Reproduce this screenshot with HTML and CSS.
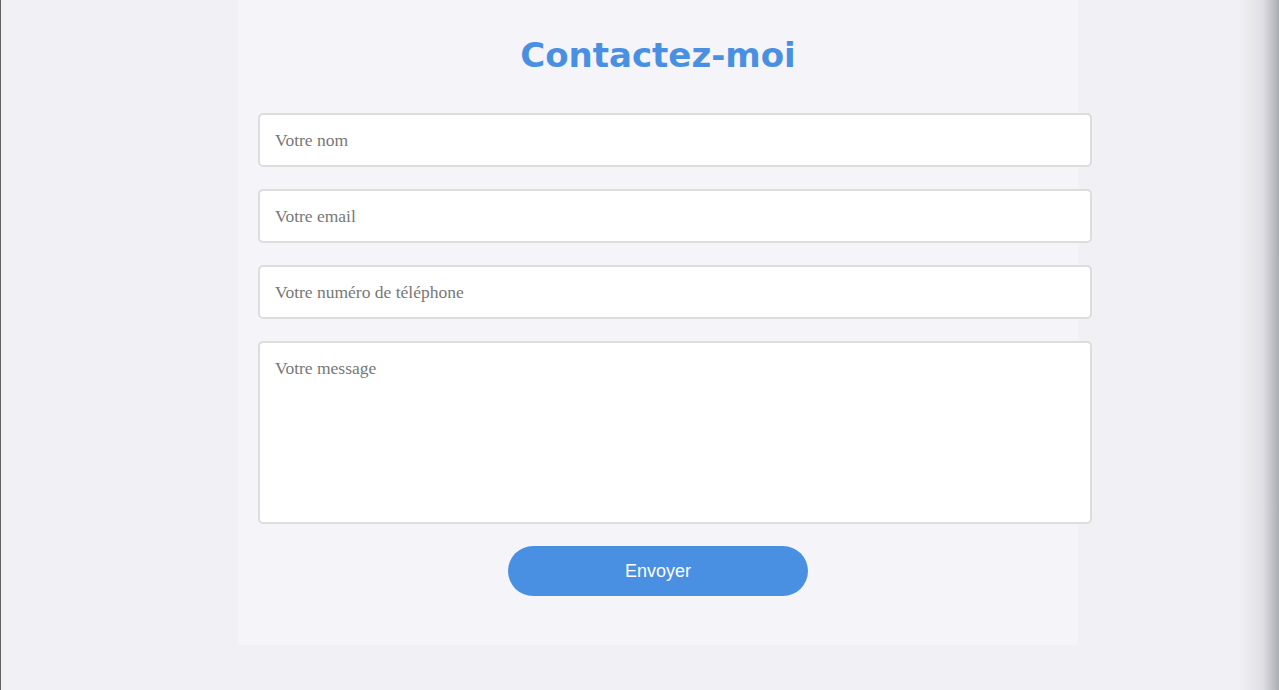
FILE: index.html
```html
<!DOCTYPE html>
<html lang="fr">
<head>
<meta charset="utf-8">
<title>Contactez-moi</title>
<link rel="stylesheet" href="styles.css">
</head>
<body>
<div class="page">
  <section class="contact">
    <h1 class="title">Contactez-moi</h1>
    <form class="form">
      <input class="field" type="text" placeholder="Votre nom">
      <input class="field" type="email" placeholder="Votre email">
      <input class="field" type="tel" placeholder="Votre numéro de téléphone">
      <textarea class="field area" placeholder="Votre message"></textarea>
      <button class="send" type="button">Envoyer</button>
    </form>
  </section>
  <div class="edge"></div>
</div>
</body>
</html>
```

FILE: styles.css
```css
html, body {
  margin: 0;
  padding: 0;
  height: 100%;
}
body {
  background: #f0f0f5;
  overflow: hidden;
}
.page {
  position: relative;
  min-height: 690px;
  border-left: 1px solid #606060;
  box-sizing: border-box;
}
.contact {
  width: 840px;
  margin-left: 237px;
  background: #f4f4f9;
  padding: 20px 20px 49px;
  box-sizing: border-box;
}
.title {
  margin: 14px 0 37px;
  text-align: center;
  color: #4a90e2;
  font-family: "DejaVu Sans", sans-serif;
  font-weight: bold;
  font-size: 34px;
  line-height: 42px;
  letter-spacing: 0;
}
.form {
  display: flex;
  flex-direction: column;
  align-items: flex-start;
}
.field {
  display: block;
  width: 100%;
  box-sizing: content-box;
  height: 20px;
  padding: 15px;
  margin: 0 0 22px;
  border: 2px solid #dddddd;
  border-radius: 5px;
  background: #fff;
  font-family: "Liberation Serif", serif;
  font-size: 17.5px;
  color: #333;
  outline: none;
}
.field::placeholder {
  color: #777;
}
.area {
  height: 149px;
  resize: none;
}
.send {
  align-self: center;
  width: 300px;
  height: 50px;
  border: none;
  border-radius: 25px;
  background: #4a90e2;
  color: #fff;
  font-family: "Liberation Sans", Arial, sans-serif;
  font-size: 18px;
}
.edge {
  position: absolute;
  top: 0;
  right: 0;
  width: 40px;
  height: 100%;
  background: linear-gradient(to right, rgba(120,120,130,0) 0%, rgba(120,120,130,0.15) 60%, rgba(90,90,100,0.45) 100%);
}
```
